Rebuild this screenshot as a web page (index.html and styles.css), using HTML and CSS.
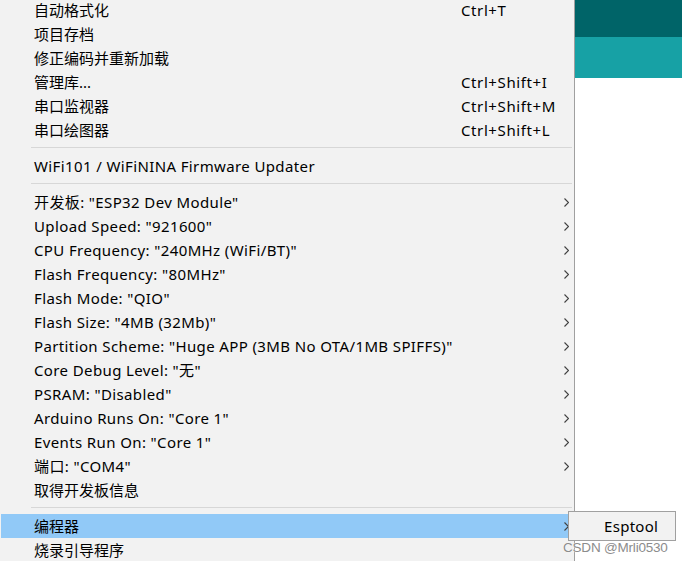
FILE: index.html
```html
<!DOCTYPE html>
<html lang="zh-CN">
<head>
<meta charset="utf-8">
<title>Tools menu</title>
<link rel="stylesheet" href="styles.css">
</head>
<body>
<div class="screen">
  <div class="menu">
    <div class="item"><span class="label zh">自动格式化</span><span class="key">Ctrl+T</span></div>
    <div class="item"><span class="label zh">项目存档</span></div>
    <div class="item"><span class="label zh">修正编码并重新加载</span></div>
    <div class="item"><span class="label zh">管理库...</span><span class="key">Ctrl+Shift+I</span></div>
    <div class="item"><span class="label zh">串口监视器</span><span class="key">Ctrl+Shift+M</span></div>
    <div class="item"><span class="label zh">串口绘图器</span><span class="key">Ctrl+Shift+L</span></div>
    <div class="sep"></div>
    <div class="item"><span class="label">WiFi101 / WiFiNINA Firmware Updater</span></div>
    <div class="sep"></div>
    <div class="item sub"><span class="label">开发板: "ESP32 Dev Module"</span><svg class="chev" viewBox="0 0 5 9"><polyline points="0.5,0.5 4.5,4.5 0.5,8.5"/></svg></div>
    <div class="item sub"><span class="label">Upload Speed: "921600"</span><svg class="chev" viewBox="0 0 5 9"><polyline points="0.5,0.5 4.5,4.5 0.5,8.5"/></svg></div>
    <div class="item sub"><span class="label">CPU Frequency: "240MHz (WiFi/BT)"</span><svg class="chev" viewBox="0 0 5 9"><polyline points="0.5,0.5 4.5,4.5 0.5,8.5"/></svg></div>
    <div class="item sub"><span class="label">Flash Frequency: "80MHz"</span><svg class="chev" viewBox="0 0 5 9"><polyline points="0.5,0.5 4.5,4.5 0.5,8.5"/></svg></div>
    <div class="item sub"><span class="label">Flash Mode: "QIO"</span><svg class="chev" viewBox="0 0 5 9"><polyline points="0.5,0.5 4.5,4.5 0.5,8.5"/></svg></div>
    <div class="item sub"><span class="label">Flash Size: "4MB (32Mb)"</span><svg class="chev" viewBox="0 0 5 9"><polyline points="0.5,0.5 4.5,4.5 0.5,8.5"/></svg></div>
    <div class="item sub"><span class="label">Partition Scheme: "Huge APP (3MB No OTA/1MB SPIFFS)"</span><svg class="chev" viewBox="0 0 5 9"><polyline points="0.5,0.5 4.5,4.5 0.5,8.5"/></svg></div>
    <div class="item sub"><span class="label">Core Debug Level: "无"</span><svg class="chev" viewBox="0 0 5 9"><polyline points="0.5,0.5 4.5,4.5 0.5,8.5"/></svg></div>
    <div class="item sub"><span class="label">PSRAM: "Disabled"</span><svg class="chev" viewBox="0 0 5 9"><polyline points="0.5,0.5 4.5,4.5 0.5,8.5"/></svg></div>
    <div class="item sub"><span class="label">Arduino Runs On: "Core 1"</span><svg class="chev" viewBox="0 0 5 9"><polyline points="0.5,0.5 4.5,4.5 0.5,8.5"/></svg></div>
    <div class="item sub"><span class="label">Events Run On: "Core 1"</span><svg class="chev" viewBox="0 0 5 9"><polyline points="0.5,0.5 4.5,4.5 0.5,8.5"/></svg></div>
    <div class="item sub"><span class="label">端口: "COM4"</span><svg class="chev" viewBox="0 0 5 9"><polyline points="0.5,0.5 4.5,4.5 0.5,8.5"/></svg></div>
    <div class="item"><span class="label zh">取得开发板信息</span></div>
    <div class="sep"></div>
    <div class="item sub active"><span class="label zh">编程器</span><svg class="chev" viewBox="0 0 5 9"><polyline points="0.5,0.5 4.5,4.5 0.5,8.5"/></svg></div>
    <div class="item"><span class="label zh">烧录引导程序</span></div>
  </div>
  <div class="editor">
    <div class="toolbar"></div>
    <div class="tabs"></div>
    <div class="page"></div>
  </div>
</div>
<div class="submenu"><span>Esptool</span></div>
<div class="watermark">CSDN @Mrli0530</div>
</body>
</html>
```
FILE: styles.css
```css
html, body {
  margin: 0;
  padding: 0;
  width: 682px;
  height: 561px;
  overflow: hidden;
  background: #ffffff;
}
body {
  position: relative;
  font-family: "Noto Sans", "Noto Sans CJK SC", sans-serif;
  font-size: 15px;
  color: #000;
}
.screen {
  display: flex;
  height: 561px;
}
.menu {
  flex: none;
  width: 575px;
  background: #f2f2f2;
  border-right: 1px solid #a0a0a0;
  margin-top: -2px;
  padding-left: 1px;
  box-sizing: border-box;
}
.item {
  height: 24px;
  display: flex;
  align-items: center;
  position: relative;
  padding-left: 33px;
  margin-right: 1px;
}
.item .label {
  white-space: nowrap;
  line-height: 24px;
  letter-spacing: 0.38px;
}
.item .label.zh {
  letter-spacing: 0;
}
.item .key {
  position: absolute;
  left: 460px;
  line-height: 24px;
  white-space: nowrap;
  letter-spacing: 0.6px;
}
.item.active {
  background: #91c9f7;
}
.chev {
  position: absolute;
  left: 563px;
  top: 8px;
  width: 5px;
  height: 9px;
  fill: none;
  stroke: #404040;
  stroke-width: 1.1;
}
.sep {
  height: 12px;
  display: flex;
  align-items: flex-start;
  padding-left: 30px;
  margin-right: 2px;
}
.sep::before {
  content: "";
  display: block;
  margin-top: 5px;
  height: 1px;
  width: 100%;
  background: #d7d7d7;
}
.editor {
  flex: 1;
  display: flex;
  flex-direction: column;
}
.toolbar {
  height: 37px;
  background: #006468;
}
.tabs {
  height: 41px;
  background: #17a1a5;
}
.page {
  flex: 1;
  background: #ffffff;
}
.submenu {
  position: absolute;
  left: 568px;
  top: 511px;
  width: 106px;
  height: 28px;
  background: #f2f2f2;
  border: 1px solid #a0a0a0;
  display: flex;
  align-items: center;
  font-size: 15px;
}
.submenu span {
  padding-left: 35px;
  letter-spacing: 0.3px;
}
.watermark {
  position: absolute;
  left: 563px;
  top: 540px;
  font-family: "Liberation Sans", sans-serif;
  font-size: 13.5px;
  color: #8c8c8c;
  text-shadow: 0 0 1px #fff, 0 0 1px #fff;
  white-space: nowrap;
  letter-spacing: -0.2px;
}
```
